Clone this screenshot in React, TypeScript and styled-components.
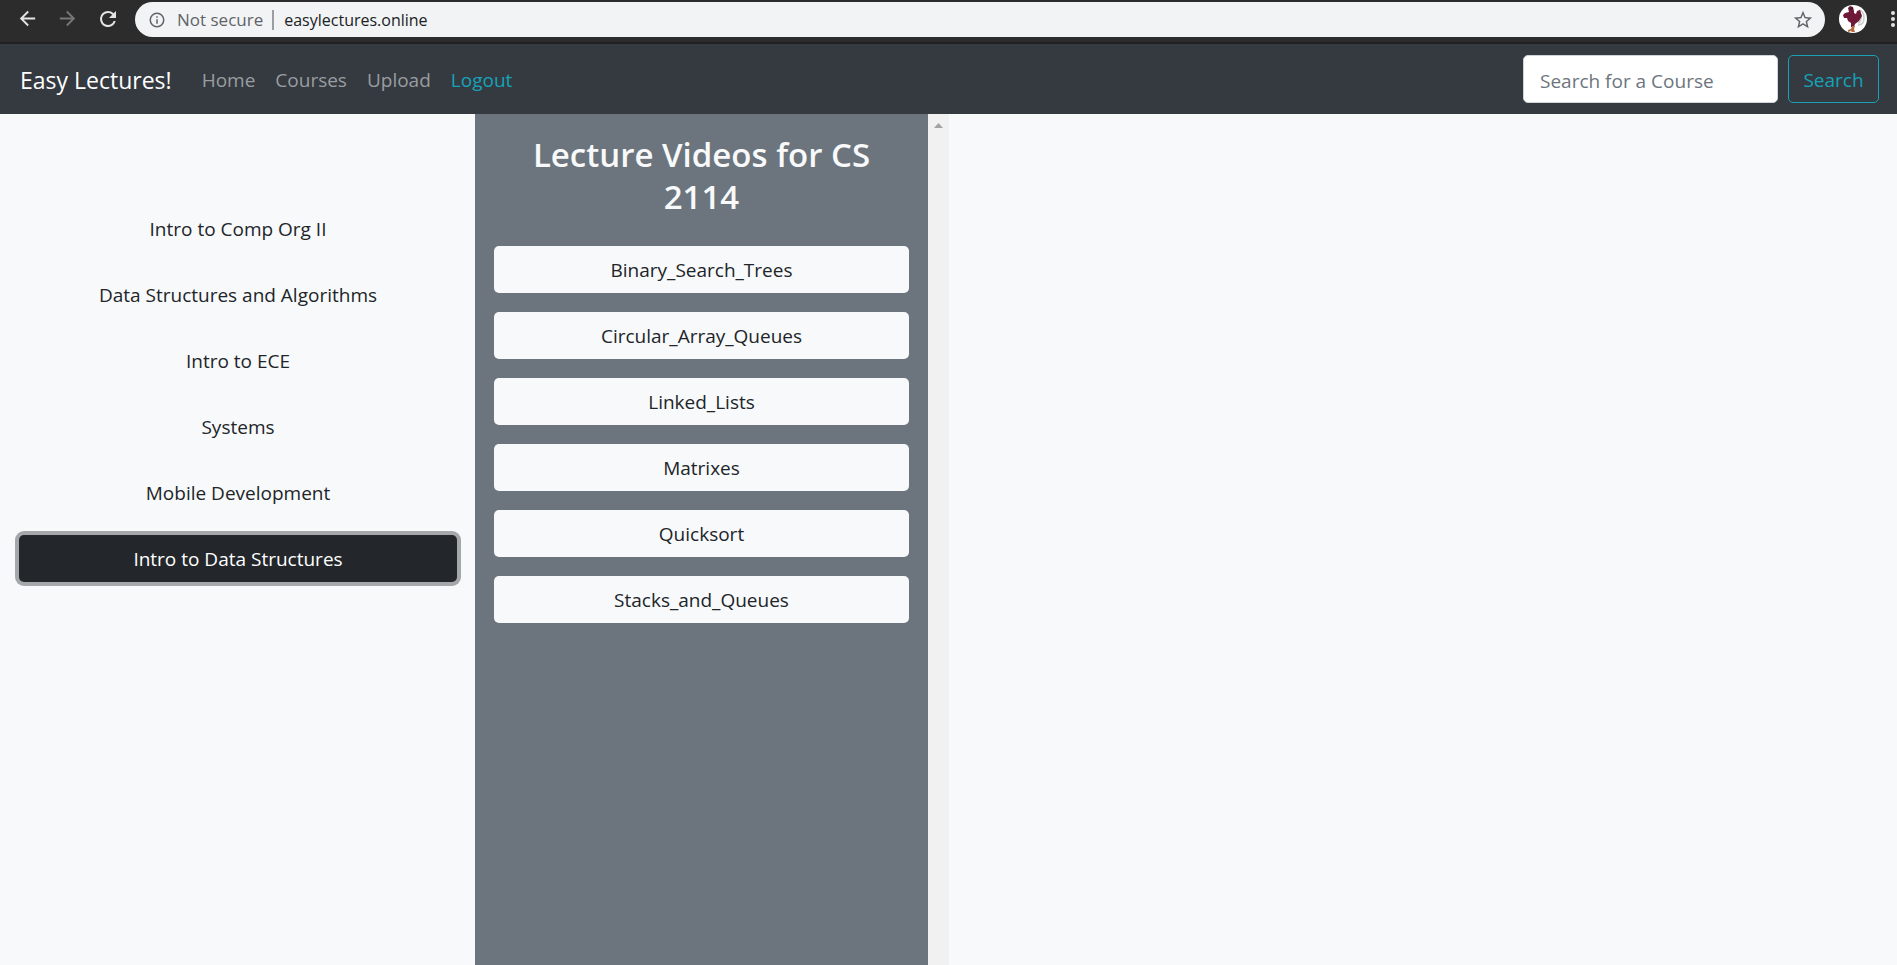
import React from 'react';
import styled, { createGlobalStyle } from 'styled-components';

const GlobalStyle = createGlobalStyle`
  *, *::before, *::after { box-sizing: border-box; }
  html, body, #root { height: 100%; }
  body {
    margin: 0;
    background: #f8f9fa;
    color: #212529;
    font-family: "Segoe UI", "Open Sans", "Noto Sans", sans-serif;
    font-size: 19px;
    line-height: 30px;
  }
  button, input { font: inherit; }
`;

const Page = styled.div`
  display: flex;
  flex-direction: column;
  min-height: 100%;
`;

const BrowserBar = styled.header`
  display: flex;
  align-items: center;
  height: 44px;
  padding: 0 0 5px 16px;
  background: #2c2c2c;
  border-bottom: 2px solid #202020;
  overflow: hidden;
`;

const IconButton = styled.button<{ $dim?: boolean }>`
  display: flex;
  flex: none;
  padding: 0;
  border: 0;
  background: none;
  color: ${(p) => (p.$dim ? '#777777' : '#e4e4e4')};
`;

const History = styled.div`
  display: flex;
  align-items: center;
  gap: 17px;
  margin-right: 15px;
`;

const AddressBar = styled.div`
  display: flex;
  flex: 1;
  align-items: center;
  height: 35px;
  margin: 2px 14px 0 0;
  padding: 0 11px 0 13px;
  border-radius: 18px;
  background: #f1f3f4;
  color: #5f6368;
  font-size: 17px;
  line-height: 24px;
`;

const Security = styled.span`
  margin-left: 11px;
  padding-right: 9px;
`;

const Divider = styled.span`
  width: 2px;
  height: 20px;
  background: #9a9da1;
`;

const Address = styled.input`
  flex: 1;
  min-width: 0;
  padding: 0 0 0 10px;
  border: 0;
  outline: 0;
  background: none;
  color: #202124;
  font-size: 16px;
`;

const StarButton = styled(IconButton)`
  color: #5f6368;
`;

const MenuButton = styled(IconButton)`
  margin-left: 22px;
`;

const NavBar = styled.nav`
  display: flex;
  align-items: center;
  min-height: 70px;
  padding: 11px 18px 11px 20px;
  background: #343a40;
`;

const Brand = styled.a`
  margin-right: 20px;
  padding-top: 2px;
  color: #ffffff;
  font-size: 23px;
  text-decoration: none;
`;

const NavLink = styled.a<{ $accent?: boolean }>`
  padding: 2px 10px 0;
  color: ${(p) => (p.$accent ? '#17a2b8' : '#9a9da0')};
  text-decoration: none;
`;

const SearchForm = styled.form`
  display: flex;
  gap: 10px;
  margin-left: auto;
`;

const SearchInput = styled.input`
  width: 255px;
  height: 48px;
  padding: 4px 16px 0;
  border: 1px solid #ced4da;
  border-radius: 5px;
  background: #ffffff;
  &::placeholder { color: #6c757d; opacity: 1; }
`;

const SearchButton = styled.button`
  height: 48px;
  width: 91px;
  padding: 2px 0 0;
  border: 1px solid #17a2b8;
  border-radius: 5px;
  background: transparent;
  color: #17a2b8;
`;

const Columns = styled.main`
  display: grid;
  grid-template-columns: 1fr 1fr 2fr;
  flex: 1;
  padding-left: 1px;
`;

const CourseList = styled.section`
  display: flex;
  flex-direction: column;
  gap: 19px;
  padding: 91px 18px 20px;
`;

const ItemButton = styled.button<{ $active?: boolean }>`
  height: 47px;
  padding: 1px 16px 0;
  border: 0;
  border-radius: 5px;
  background: ${(p) => (p.$active ? '#23272b' : '#f8f9fa')};
  color: ${(p) => (p.$active ? '#ffffff' : '#212529')};
  box-shadow: ${(p) => (p.$active ? '0 0 0 4px #a4a8ab' : 'none')};
`;

const LecturePane = styled.section`
  display: flex;
`;

const Lectures = styled.div`
  display: flex;
  flex: 1;
  flex-direction: column;
  gap: 19px;
  padding: 20px 19px;
  background: #6c757d;
`;

const Title = styled.h1`
  margin: 0 0 9px;
  padding: 0 19px;
  color: #f8f9fa;
  font-size: 33px;
  font-weight: 600;
  line-height: 42px;
  text-align: center;
`;

const ScrollTrack = styled.div`
  display: flex;
  justify-content: center;
  width: 21px;
  padding-top: 9px;
  background: #f1f1f1;
`;

const courses = [
  'Intro to Comp Org II',
  'Data Structures and Algorithms',
  'Intro to ECE',
  'Systems',
  'Mobile Development',
  'Intro to Data Structures',
];

const lectures = [
  'Binary_Search_Trees',
  'Circular_Array_Queues',
  'Linked_Lists',
  'Matrixes',
  'Quicksort',
  'Stacks_and_Queues',
];

const Icon = ({ d, size = 24 }: { d: string; size?: number }) => (
  <svg width={size} height={size} viewBox="0 0 24 24" fill="currentColor" aria-hidden="true">
    <path d={d} />
  </svg>
);

const BACK = 'M20 11H7.83l5.59-5.59L12 4l-8 8 8 8 1.41-1.41L7.83 13H20v-2z';
const FORWARD = 'M12 4l-1.41 1.41L16.17 11H4v2h12.17l-5.58 5.59L12 20l8-8z';
const RELOAD =
  'M17.65 6.35A7.96 7.96 0 0 0 12 4a8 8 0 1 0 7.73 10h-2.08A6 6 0 1 1 12 6c1.66 0 3.14.69 4.22 1.78L13 11h7V4l-2.35 2.35z';
const INFO =
  'M11 17h2v-6h-2v6zm1-15a10 10 0 1 0 0 20 10 10 0 0 0 0-20zm0 18a8 8 0 1 1 0-16 8 8 0 0 1 0 16zM11 9h2V7h-2v2z';
const STAR =
  'M22 9.24l-7.19-.62L12 2 9.19 8.63 2 9.24l5.46 4.73L5.82 21 12 17.27 18.18 21l-1.63-7.03L22 9.24zM12 15.4l-3.76 2.27 1-4.28-3.32-2.88 4.38-.38L12 6.1l1.71 4.04 4.38.38-3.32 2.88 1 4.28L12 15.4z';

const Avatar = () => (
  <svg width="28" height="28" viewBox="0 0 28 28" aria-hidden="true">
    <circle cx="14" cy="14" r="14" fill="#ffffff" />
    <path d="M20 5q5 1 5 8t-6 7M20 8q3 2 2 6t-3 4" fill="none" stroke="#c9cccb" strokeWidth="1.5" />
    <path
      d="M9 3l2-2 3 1 1 4 0 2 2 1 1-3 3-1 1 3 1 3-3 5-4 3-1 3h-3v-4l-3-2-1-3-3 0-1-3 2-2 4-1z"
      fill="#6f1939"
    />
    <path d="M11 3l2-1 1 2-2 1z" fill="#351826" />
    <path d="M13 21h3l-1 3 1 3h-3l-1-1-3 1 0-2 3-1z" fill="#b56b3e" />
  </svg>
);

export default function App() {
  return (
    <>
      <GlobalStyle />
      <Page>
        <BrowserBar>
          <History>
            <IconButton type="button" aria-label="Back"><Icon d={BACK} size={23} /></IconButton>
            <IconButton type="button" aria-label="Forward" $dim><Icon d={FORWARD} size={23} /></IconButton>
            <IconButton type="button" aria-label="Reload"><Icon d={RELOAD} /></IconButton>
          </History>
          <AddressBar>
            <Icon d={INFO} size={18} />
            <Security>Not secure</Security>
            <Divider />
            <Address aria-label="Address" defaultValue="easylectures.online" />
            <StarButton type="button" aria-label="Bookmark"><Icon d={STAR} size={22} /></StarButton>
          </AddressBar>
          <IconButton type="button" aria-label="Profile"><Avatar /></IconButton>
          <MenuButton type="button" aria-label="Menu">
            <svg width="8" height="18" viewBox="0 0 8 18" fill="currentColor" aria-hidden="true">
              <circle cx="4" cy="3" r="2" />
              <circle cx="4" cy="9" r="2" />
              <circle cx="4" cy="15" r="2" />
            </svg>
          </MenuButton>
        </BrowserBar>
        <NavBar>
          <Brand href="#">Easy Lectures!</Brand>
          <NavLink href="#home">Home</NavLink>
          <NavLink href="#courses">Courses</NavLink>
          <NavLink href="#upload">Upload</NavLink>
          <NavLink href="#logout" $accent>Logout</NavLink>
          <SearchForm role="search" onSubmit={(e) => e.preventDefault()}>
            <SearchInput type="text" placeholder="Search for a Course" aria-label="Search for a Course" />
            <SearchButton type="submit">Search</SearchButton>
          </SearchForm>
        </NavBar>
        <Columns>
          <CourseList>
            {courses.map((name) => (
              <ItemButton key={name} type="button" $active={name === 'Intro to Data Structures'}>
                {name}
              </ItemButton>
            ))}
          </CourseList>
          <LecturePane>
            <Lectures>
              <Title>Lecture Videos for CS 2114</Title>
              {lectures.map((name) => (
                <ItemButton key={name} type="button">{name}</ItemButton>
              ))}
            </Lectures>
            <ScrollTrack>
              <svg width="9" height="5" viewBox="0 0 9 5" fill="#a3a3a3" aria-hidden="true">
                <path d="M4.500 0L9 5H0z" />
              </svg>
            </ScrollTrack>
          </LecturePane>
        </Columns>
      </Page>
    </>
  );
}
